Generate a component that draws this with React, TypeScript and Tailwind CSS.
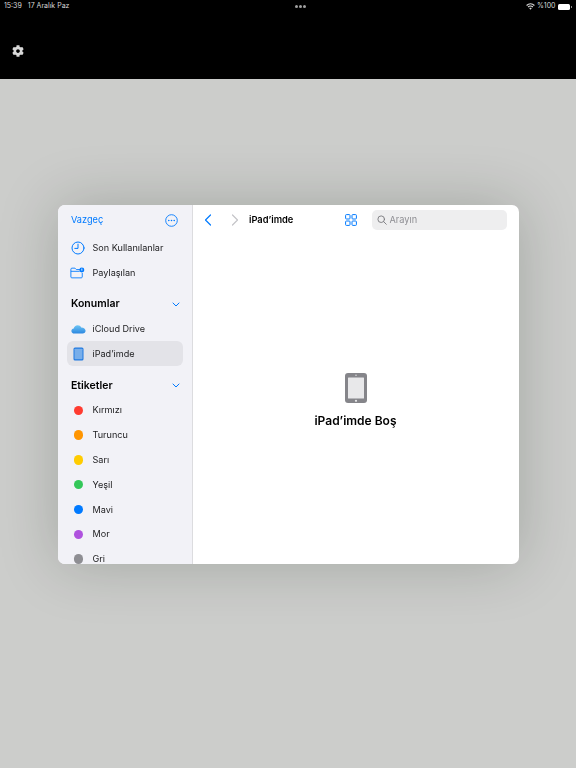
import { FaCog } from 'react-icons/fa'

const TAGS = [
  { name: 'Kırmızı', color: 'bg-[#ff3b30]' },
  { name: 'Turuncu', color: 'bg-[#ff9500]' },
  { name: 'Sarı', color: 'bg-[#ffcc00]' },
  { name: 'Yeşil', color: 'bg-[#34c759]' },
  { name: 'Mavi', color: 'bg-[#007aff]' },
  { name: 'Mor', color: 'bg-[#af52de]' },
  { name: 'Gri', color: 'bg-[#8e8e93]' },
]

function Chevron() {
  return (
    <svg width="8" height="5" viewBox="0 0 8 5" fill="none" stroke="#007aff" strokeWidth="1" strokeLinecap="round" strokeLinejoin="round">
      <path d="M1 1l3 3 3-3" />
    </svg>
  )
}

function Row({ icon, label, active }: { icon: React.ReactNode; label: string; active?: boolean }) {
  return (
    <div className={`flex h-[24.8px] items-center rounded-[6px] ${active ? 'bg-[#e3e3e8]' : ''}`}>
      <div className="flex w-[23px] shrink-0 items-center justify-center">{icon}</div>
      <span className="ml-[3px] text-[9.1px] text-[#1c1c1e]">{label}</span>
    </div>
  )
}

function SectionHead({ title }: { title: string }) {
  return (
    <div className="mt-[6.8px] flex h-[24.8px] items-center justify-between pl-[4.5px] pr-[3px]">
      <span className="text-[10.5px] font-semibold text-black">{title}</span>
      <Chevron />
    </div>
  )
}

export default function App() {
  return (
    <div className="relative flex h-[768px] w-[576px] flex-col overflow-hidden bg-[#cccdcb] font-['Inter','Liberation_Sans',sans-serif] antialiased">
      <div className="h-[79px] shrink-0 bg-black text-white">
        <div className="flex h-[12px] items-center justify-between px-[4px] pt-[1px] text-[7px] text-[#d8d8d8]">
          <div className="flex gap-[6px]">
            <span>15:39</span>
            <span>17 Aralık Paz</span>
          </div>
          <div className="ml-[6px] flex gap-[1.5px]">
            <span className="h-[2.5px] w-[2.5px] rounded-full bg-[#a0a0a0]" />
            <span className="h-[2.5px] w-[2.5px] rounded-full bg-[#a0a0a0]" />
            <span className="h-[2.5px] w-[2.5px] rounded-full bg-[#a0a0a0]" />
          </div>
          <div className="flex items-center gap-[2px]">
            <svg width="9" height="7" viewBox="0 0 18 14" fill="none" stroke="#d8d8d8" strokeWidth="2.200">
              <path d="M1.200 5C3.200 3 6 1.600 9 1.600S14.800 3 16.800 5" />
              <path d="M4.200 8C5.400 6.800 7.100 6 9 6s3.600.8 4.800 2" />
              <path d="M9 13.500l-2.500-3c.7-.5 1.500-.8 2.500-.8s1.800.3 2.500.8z" fill="#d8d8d8" stroke="none" />
            </svg>
            <span>%100</span>
            <div className="ml-[1px] flex items-center">
              <div className="h-[6px] w-[12px] rounded-[1.5px] bg-white" />
              <div className="ml-[0.5px] h-[2px] w-[1px] bg-[#8a8a8a]" />
            </div>
          </div>
        </div>
        <div className="pl-[12px] pt-[33px]">
          <FaCog size={12} color="#d8d8d8" />
        </div>
      </div>

      <div className="fixed inset-0 flex items-center justify-center">
        <div className="flex h-[359px] w-[461px] overflow-hidden rounded-[7px] bg-white shadow-[0_0_60px_rgba(20,30,20,0.22)]">
          <aside className="w-[135px] shrink-0 overflow-hidden border-r border-[#dcdcdf] bg-[#f2f2f7] px-[9px]">
            <div className="flex h-[31px] items-center justify-between pl-[4.5px] pr-[5px]">
              <span className="text-[9.2px] text-[#007aff]">Vazgeç</span>
              <svg width="13" height="13" viewBox="0 0 13 13" fill="none">
                <circle cx="6.500" cy="6.500" r="5.800" stroke="#007aff" strokeWidth="0.900" />
                <circle cx="3.800" cy="6.500" r="0.800" fill="#007aff" />
                <circle cx="6.500" cy="6.500" r="0.800" fill="#007aff" />
                <circle cx="9.200" cy="6.500" r="0.800" fill="#007aff" />
              </svg>
            </div>
            <Row
              label="Son Kullanılanlar"
              icon={
                <svg width="14" height="14" viewBox="0 0 14 14" fill="none" stroke="#007aff" strokeWidth="1" strokeLinecap="round">
                  <circle cx="7" cy="7" r="6" />
                  <path d="M7 3.200V7.400H3.800" />
                </svg>
              }
            />
            <Row
              label="Paylaşılan"
              icon={
                <svg className="-ml-[1px]" width="15" height="12" viewBox="0 0 17 13" fill="none">
                  <path d="M1 11V2.200C1 1.500 1.500 1 2.200 1h3.400l1.600 1.600h4.300M1 4.600h10M1 11c0 .6.5 1 1.100 1h10.700c.6 0 1.100-.4 1.100-1V6.500" stroke="#007aff" strokeWidth="1" />
                  <circle cx="13.400" cy="3" r="2.800" fill="#007aff" />
                  <circle cx="13.400" cy="2.200" r="0.700" fill="white" />
                  <path d="M12.200 4.300c.3-.8 2.100-.8 2.400 0z" fill="white" />
                </svg>
              }
            />
            <SectionHead title="Konumlar" />
            <Row
              label="iCloud Drive"
              icon={
                <svg className="ml-[1px]" width="15" height="10" viewBox="0 0 15 10">
                  <defs>
                    <linearGradient id="cloud" x1="0" y1="0" x2="0" y2="1">
                      <stop offset="0" stopColor="#6ec6f5" />
                      <stop offset="1" stopColor="#2a86e0" />
                    </linearGradient>
                  </defs>
                  <path d="M3.400 9.600C1.600 9.600.4 8.500.4 7c0-1.400 1-2.400 2.300-2.500C3.100 2.600 4.700 1.200 6.700 1.200c1.600 0 2.900.9 3.500 2.200C12.600 3.300 14.600 5 14.600 6.800c0 1.600-1.300 2.800-3 2.800H3.400z" fill="url(#cloud)" />
                </svg>
              }
            />
            <Row
              active
              label="iPad’imde"
              icon={
                <svg className="ml-[1px]" width="11" height="14" viewBox="0 0 11 14">
                  <rect x="0.500" y="0.500" width="10" height="13" rx="1.500" fill="#1f78e0" />
                  <rect x="1.500" y="1.800" width="8" height="10.400" rx="0.400" fill="#78aeea" />
                </svg>
              }
            />
            <SectionHead title="Etiketler" />
            {TAGS.map((tag) => (
              <Row key={tag.name} label={tag.name} icon={<span className={`ml-[1px] h-[9.500px] w-[9.500px] rounded-full ${tag.color}`} />} />
            ))}
          </aside>

          <main className="flex min-w-0 flex-1 flex-col">
            <div className="flex h-[31px] shrink-0 items-center pl-[11px] pr-[12px]">
              <svg width="8" height="12" viewBox="0 0 8 12" fill="none" stroke="#007aff" strokeWidth="1.200" strokeLinecap="round" strokeLinejoin="round">
                <path d="M6.500 1L1.500 6l5 5" />
              </svg>
              <svg className="ml-[19px]" width="8" height="12" viewBox="0 0 8 12" fill="none" stroke="#c4c4c8" strokeWidth="1.200" strokeLinecap="round" strokeLinejoin="round">
                <path d="M1.500 1l5 5-5 5" />
              </svg>
              <span className="ml-[10.5px] text-[9.300px] font-semibold text-black">iPad’imde</span>
              <svg className="ml-auto" width="12" height="12" viewBox="0 0 12 12" fill="none" stroke="#007aff" strokeWidth="1">
                <rect x="0.600" y="0.600" width="4.400" height="4.400" rx="0.800" />
                <rect x="7" y="0.600" width="4.400" height="4.400" rx="0.800" />
                <rect x="0.600" y="7" width="4.400" height="4.400" rx="0.800" />
                <rect x="7" y="7" width="4.400" height="4.400" rx="0.800" />
              </svg>
              <div className="ml-[15px] flex h-[20px] w-[135px] items-center gap-[3px] rounded-[5px] bg-[#eeeeef] pl-[5px]">
                <svg width="10" height="10" viewBox="0 0 10 10" fill="none" stroke="#77777c" strokeWidth="0.900" strokeLinecap="round">
                  <circle cx="4.200" cy="4.200" r="3.300" />
                  <path d="M6.700 6.700L9.300 9.300" />
                </svg>
                <span className="text-[9.200px] text-[#8e8e93]">Arayın</span>
              </div>
            </div>
            <div className="flex flex-1 flex-col items-center pt-[137px]">
              <svg width="22" height="30" viewBox="0 0 22 30">
                <rect x="0" y="0" width="22" height="30" rx="3" fill="#85858a" />
                <rect x="3" y="4.500" width="16" height="21" rx="0.500" fill="#e8e8ea" />
                <circle cx="11" cy="2.200" r="0.700" fill="#e8e8ea" />
                <circle cx="11" cy="27.800" r="1.100" fill="#e8e8ea" />
              </svg>
              <span className="mt-[9px] text-[12px] font-semibold text-black">iPad’imde Boş</span>
            </div>
          </main>
        </div>
      </div>
    </div>
  )
}
